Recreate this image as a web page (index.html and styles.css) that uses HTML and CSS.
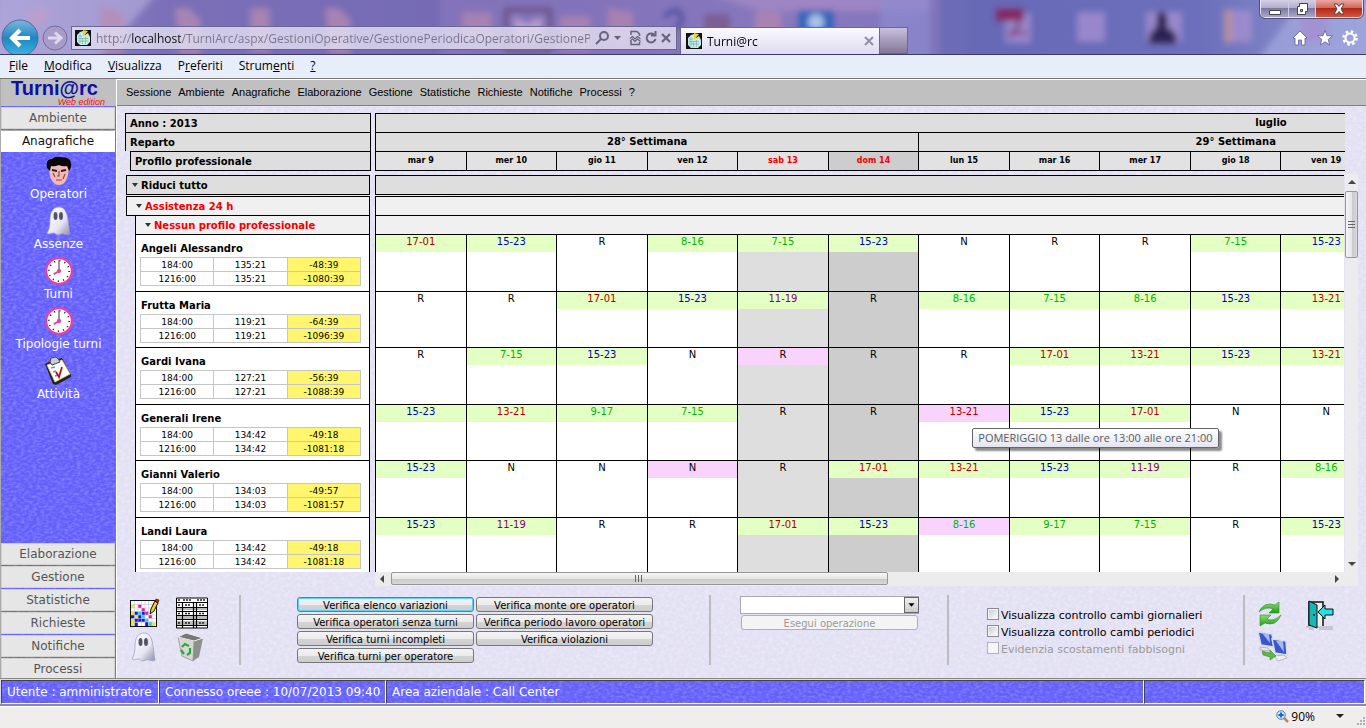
FILE: index.html
```html
<!DOCTYPE html>
<html lang="it">
<head>
<meta charset="utf-8">
<title>Turni@rc</title>
<link rel="stylesheet" href="styles.css">
</head>
<body>
<svg class="defs" aria-hidden="true">
  <defs>
    <filter id="soft"><feGaussianBlur stdDeviation="3"/></filter>
    <linearGradient id="ghostFill" x1="0" x2="1" y1="0" y2="1"><stop offset="0" stop-color="#fff"/><stop offset=".6" stop-color="#e6e6f4"/><stop offset="1" stop-color="#8d8da8"/></linearGradient>
    <linearGradient id="backFill" x1="0" x2="0" y1="0" y2="1"><stop offset="0" stop-color="#7cb8de"/><stop offset=".5" stop-color="#1f86c4"/><stop offset="1" stop-color="#3cb6e2"/></linearGradient>
    <linearGradient id="greenFill" x1="0" x2="0" y1="0" y2="1"><stop offset="0" stop-color="#8ae06c"/><stop offset="1" stop-color="#1f9a1f"/></linearGradient>
    <symbol id="site" viewBox="0 0 16 16"><rect width="16" height="16" fill="#111"/><path d="M2 5l3-3 3-1v3l2 1 3-2 2 4v5l-3 3H5l-3-3z" fill="#c4ebe6"/><path d="M8 0l5 1-5 6z" fill="#f4d21c"/><path d="M3 6h4M3 8.500h10M3 11h10M5 4v9M7.500 8v6M10.500 7v7" stroke="#7bb5ae" stroke-width=".7"/></symbol>
    <symbol id="ghost" viewBox="0 0 28 30"><path d="M14 1C7 1 5 8 5 14c0 6-1 10-3 13 2 2 4 0 6 0s3 2 5 2 4-2 6-1 5 1 6 0c-1-4-1-8-2-14-1-7-3-13-9-13z" fill="url(#ghostFill)" stroke="#9a9ac0" stroke-width=".7"/><ellipse cx="10.500" cy="10" rx="2" ry="4" fill="#55556a"/><ellipse cx="16" cy="10" rx="2" ry="4" fill="#55556a"/></symbol>
    <symbol id="clock" viewBox="0 0 28 28"><circle cx="14" cy="14" r="12" fill="#fff" stroke="#ee3fa0" stroke-width="2"/><circle cx="14" cy="14" r="9.500" fill="none" stroke="#222" stroke-width="1.600" stroke-dasharray="1 3.974"/><path d="M14 14V4" stroke="#777" stroke-width="1.400"/><path d="M14 14l-5 3" stroke="#e0409a" stroke-width="1.600"/><circle cx="14" cy="14" r="2" fill="#ee3fa0"/></symbol>
  </defs>
</svg>

<header class="browser">
  <svg class="glass" viewBox="0 0 1366 54" preserveAspectRatio="none" aria-hidden="true">
    <g filter="url(#soft)">
      <path d="M0-10h160L90 70H-10z" fill="#b9b2e0" opacity=".6"/>
      <path d="M440-9h500v75H440z" fill="#8f7cc0" opacity=".5"/>
      <path d="M700-9h230v20H760z" fill="#a98bc8" opacity=".7"/>
      <path d="M1250 70l60-80h70v80z" fill="#a3aade" opacity=".7"/>
      <path d="M25 15l16-8 10 5-8 12-12 3z" fill="#c79bc8" opacity=".6"/>
      <path d="M100 8h14l10 10v36h-22zM175 8h14l12 12v34h-22zM250 8h20v44h-20zM325 8h14l12 12v34h-22z" fill="#b78bb0" opacity=".75"/>
      <path d="M462 12h30v28h-30zM560 16h30v34h-30zM608 8l25 4v30h-25zM755 12h26v22h-26z" fill="#c08cab" opacity=".6"/>
      <path d="M506 10h44v40h-44z" fill="none" stroke="#65486f" stroke-width="4"/><path d="M514 16l12 8 16-7v22h-26z" fill="#bb9cc8"/>
      <path d="M664 17q16-14 18 2-2 8-8 9" fill="none" stroke="#4c4da0" stroke-width="5"/>
      <path d="M704 14h26v30h-26z" fill="#7c5f93"/><path d="M798 10h36v34h-36z" fill="#2e64b8"/><circle cx="816" cy="22" r="8" fill="#a8c4e8"/>
      <path d="M880-5h50v70h-50z" fill="#8d8bd0" opacity=".7"/><path d="M1005 13h26v30h-26zM1077 12h28v30h-28zM1146 12h36v30h-36zM1224 10h28v32h-28zM1300 12h28v30h-28z" fill="#a48fd0" opacity=".8"/>
      <path d="M996 9h28v12h-28z" fill="#852862"/><path d="M1010 38q10-10 9-18M1008 33h20" stroke="#8b3f84" stroke-width="3"/>
      <path d="M1148 43q2-14 9-16-2-16 5-15 7 0 5 16 10 2 10 15z" fill="#2f2152"/><path d="M1224 9h8v34h-8z" fill="#b78f9e"/>
    </g>
  </svg>
  <div class="window-buttons">
    <button type="button" aria-label="Riduci a icona"><svg width="14" height="14" viewBox="0 0 14 14"><path d="M1.500 8.500h11v4h-11z" fill="#fff" stroke="#445" /></svg></button>
    <button type="button" aria-label="Ripristina"><svg width="14" height="14" viewBox="0 0 14 14"><path d="M4.500 1.500h8v8h-2v3h-8v-8h2z" fill="#fff" stroke="#445"/><path d="M5.500 7.500h2v2h-2z" fill="#9a94b8" stroke="#445"/></svg></button>
    <button type="button" class="close" aria-label="Chiudi"><svg width="14" height="14" viewBox="0 0 14 14"><path d="M2 2h3l2 2.500L9 2h3L9 7l3 5H9L7 9.500 5 12H2l3-5z" fill="#fff" stroke="#544"/></svg></button>
  </div>
  <nav class="nav-row">
    <button type="button" class="round" aria-label="Indietro"><svg width="38" height="38" viewBox="0 0 38 38"><circle cx="19" cy="19" r="18" fill="url(#backFill)" stroke="#56658f"/><path d="M29 19H12M19 11l-8 8 8 8" fill="none" stroke="#fff" stroke-width="4"/></svg></button>
    <button type="button" class="round" aria-label="Avanti"><svg width="26" height="26" viewBox="0 0 26 26"><circle cx="13" cy="13" r="12" fill="#a79bc9" stroke="#716b9b"/><path d="M6 13h12M13 7.500l6 5.500-6 5.500" fill="none" stroke="#dcd8ee" stroke-width="3"/></svg></button>
    <div class="address">
      <svg width="16" height="16"><use href="#site"/></svg>
      <input type="text" aria-label="Indirizzo" value="http://localhost/TurniArc/aspx/GestioniOperative/GestionePeriodicaOperatori/GestionePeriodica">
      <svg width="76" height="16" viewBox="0 0 76 16" fill="none" stroke="#66647c" stroke-width="2"><circle cx="9" cy="6" r="4"/><path d="M6 9l-5 5"/><path d="M19 6h7l-3.500 4z" fill="#66647c" stroke="none"/><path d="M36 5V1.500h6l2.500 2.500v2M36 11v3.500h8.500V12" stroke-width="1.500"/><path d="M35 8.500l2.500-2L40 9l2.500-2.500L45.500 9M35 11l2.500-2L40 11.500 42.500 9l3 2.500" stroke-width="1.200"/><path d="M59 4.500A4.500 4.500 0 1 0 60.500 9M60.500 1v4.500H56"/><path d="M67 4l8 8M75 4l-8 8" stroke-width="2.200"/></svg>
    </div>
    <div class="tab"><svg width="16" height="16"><use href="#site"/></svg><span>Turni@rc</span><button type="button" aria-label="Chiudi scheda"><svg width="10" height="10" viewBox="0 0 10 10"><path d="M1 1l8 8M9 1L1 9" stroke="#918fa5" stroke-width="2"/></svg></button></div>
    <button type="button" class="new-tab" aria-label="Nuova scheda"></button>
    <div class="tools">
      <button type="button" aria-label="Home"><svg width="16" height="16" viewBox="0 0 16 16"><path d="M8 1l7 7-1 1-1-1v7H9.500v-5h-3v5H3V8L2 9 1 8z" fill="#fff" stroke="#5f5f8a" stroke-width=".8"/></svg></button>
      <button type="button" aria-label="Preferiti"><svg width="16" height="16" viewBox="0 0 16 16"><path d="M8 .5l2 5.200 5.500.2-4.300 3.500 1.500 5.600L8 11.800 3.300 15l1.500-5.600L.5 5.900l5.500-.2z" fill="#fff" stroke="#5f5f8a" stroke-width=".8"/></svg></button>
      <button type="button" aria-label="Strumenti"><svg width="16" height="16" viewBox="0 0 16 16"><circle cx="8" cy="8" r="6.500" fill="none" stroke="#fff" stroke-width="2.500" stroke-dasharray="2.550 2.550"/><circle cx="8" cy="8" r="4.500" fill="none" stroke="#fff" stroke-width="2"/></svg></button>
    </div>
  </nav>
</header>

<nav class="menubar">
  <a href="#"><u>F</u>ile</a><a href="#"><u>M</u>odifica</a><a href="#"><u>V</u>isualizza</a><a href="#">P<u>r</u>eferiti</a><a href="#">Strum<u>e</u>nti</a><a href="#"><u>?</u></a>
</nav>

<div class="app">
  <aside class="sidebar">
    <div class="logo"><strong>Turni@rc</strong><em>Web edition</em></div>
    <div class="tabs"><button type="button">Ambiente</button><button type="button" class="open">Anagrafiche</button></div>
    <nav class="shortcuts">
      <a href="#"><svg width="30" height="30" viewBox="0 0 30 30"><path d="M5 11q0 13 6 17 4 2 8 0 5-3 6-17l-3-5H9z" fill="#f3b9b4"/><path d="M3 12Q1 3 8 3q3-3 9-2 9 0 10 6 1 4-2 8l-2-5q-5 1-8-1-5 2-8 1l-1 5z" fill="#080808"/><path d="M8 14l5 1M17 15l5-1" stroke="#222" stroke-width="1.800"/><path d="M15 15v5h-2M12 24h6M9 17l2 4M21 18l-2 5" stroke="#8a4b50" stroke-width="1.200" fill="none"/></svg>Operatori</a>
      <a href="#"><svg width="28" height="30"><use href="#ghost"/></svg>Assenze</a>
      <a href="#"><svg width="30" height="30"><use href="#clock"/></svg>Turni</a>
      <a href="#"><svg width="30" height="30"><use href="#clock"/></svg>Tipologie turni</a>
      <a href="#"><svg width="30" height="30" viewBox="0 0 30 30"><path d="M1 8l6-3 11-3 9 17v2l-15 8-3-1z" fill="#222"/><path d="M3 9l15-5 8 14-15 8z" fill="#fff" stroke="#e8d27a" stroke-width=".8"/><path d="M6 6l1-4 5-1 3 3 1 2-8 3z" fill="#c9cdd2" stroke="#444"/><path d="M7 12l4-1M9 16l3-1M11 20l3-1" stroke="#7a84dc" stroke-width="1.500"/><path d="M12 16l3 5 3-10" fill="none" stroke="#b01818" stroke-width="1.800"/></svg>Attività</a>
    </nav>
    <div class="tabs tabs-low"><button type="button">Elaborazione</button><button type="button">Gestione</button><button type="button">Statistiche</button><button type="button">Richieste</button><button type="button">Notifiche</button><button type="button">Processi</button></div>
  </aside>

  <main class="main">
    <nav class="topbar"><a href="#">Sessione</a><a href="#">Ambiente</a><a href="#">Anagrafiche</a><a href="#">Elaborazione</a><a href="#">Gestione</a><a href="#">Statistiche</a><a href="#">Richieste</a><a href="#">Notifiche</a><a href="#">Processi</a><a href="#">?</a></nav>

    <section class="planner">
      <div class="key"><div>Anno : 2013</div><div>Reparto</div><div class="inner">Profilo professionale</div></div>
      <div class="clip">
        <table class="days">
          <colgroup><col span="20"></colgroup>
          <tr><th colspan="20" class="month">luglio</th></tr>
          <tr><th colspan="6">28° Settimana</th><th colspan="7">29° Settimana</th><th colspan="7"></th></tr>
          <tr class="dates"><th>mar 9</th><th>mer 10</th><th>gio 11</th><th>ven 12</th><th class="red">sab 13</th><th class="red sunday">dom 14</th><th>lun 15</th><th>mar 16</th><th>mer 17</th><th>gio 18</th><th>ven 19</th><th colspan="9"></th></tr>
        </table>
      </div>

      <div class="people">
        <button type="button" class="fold all">Riduci tutto</button>
        <button type="button" class="fold dept">Assistenza 24 h</button>
        <button type="button" class="fold profile">Nessun profilo professionale</button>
        <div class="list">
          <div class="person"><b>Angeli Alessandro</b><table><tr><td>184:00</td><td>135:21</td><td>-48:39</td></tr><tr><td>1216:00</td><td>135:21</td><td>-1080:39</td></tr></table></div>
          <div class="person"><b>Frutta Maria</b><table><tr><td>184:00</td><td>119:21</td><td>-64:39</td></tr><tr><td>1216:00</td><td>119:21</td><td>-1096:39</td></tr></table></div>
          <div class="person"><b>Gardi Ivana</b><table><tr><td>184:00</td><td>127:21</td><td>-56:39</td></tr><tr><td>1216:00</td><td>127:21</td><td>-1088:39</td></tr></table></div>
          <div class="person"><b>Generali Irene</b><table><tr><td>184:00</td><td>134:42</td><td>-49:18</td></tr><tr><td>1216:00</td><td>134:42</td><td>-1081:18</td></tr></table></div>
          <div class="person"><b>Gianni Valerio</b><table><tr><td>184:00</td><td>134:03</td><td>-49:57</td></tr><tr><td>1216:00</td><td>134:03</td><td>-1081:57</td></tr></table></div>
          <div class="person"><b>Landi Laura</b><table><tr><td>184:00</td><td>134:42</td><td>-49:18</td></tr><tr><td>1216:00</td><td>134:42</td><td>-1081:18</td></tr></table></div>
        </div>
      </div>
      <div class="clip body-clip">
        <div class="band all"></div><div class="band dept"></div><div class="band profile"></div>
        <table class="shifts">
          <colgroup><col span="4"><col class="sat"><col class="sun"><col span="14"></colgroup>
          <tr><td><span class="s on late">17-01</span></td><td><span class="s on noon">15-23</span></td><td><span class="s">R</span></td><td><span class="s on early">8-16</span></td><td><span class="s on early">7-15</span></td><td><span class="s on noon">15-23</span></td><td><span class="s">N</span></td><td><span class="s">R</span></td><td><span class="s">R</span></td><td><span class="s on early">7-15</span></td><td><span class="s on noon">15-23</span></td><td colspan="9"></td></tr>
          <tr><td><span class="s">R</span></td><td><span class="s">R</span></td><td><span class="s on late">17-01</span></td><td><span class="s on noon">15-23</span></td><td><span class="s on mid">11-19</span></td><td><span class="s">R</span></td><td><span class="s on early">8-16</span></td><td><span class="s on early">7-15</span></td><td><span class="s on early">8-16</span></td><td><span class="s on noon">15-23</span></td><td><span class="s on late">13-21</span></td><td colspan="9"></td></tr>
          <tr><td><span class="s">R</span></td><td><span class="s on early">7-15</span></td><td><span class="s on noon">15-23</span></td><td><span class="s">N</span></td><td><span class="s changed">R</span></td><td><span class="s">R</span></td><td><span class="s">R</span></td><td><span class="s on late">17-01</span></td><td><span class="s on late">13-21</span></td><td><span class="s on noon">15-23</span></td><td><span class="s on late">13-21</span></td><td colspan="9"></td></tr>
          <tr><td><span class="s on noon">15-23</span></td><td><span class="s on late">13-21</span></td><td><span class="s on early">9-17</span></td><td><span class="s on early">7-15</span></td><td><span class="s">R</span></td><td><span class="s">R</span></td><td class="hovered"><span class="s changed late">13-21</span><span class="tooltip" role="tooltip">POMERIGGIO 13 dalle ore 13:00 alle ore 21:00</span></td><td><span class="s on noon">15-23</span></td><td><span class="s on late">17-01</span></td><td><span class="s">N</span></td><td><span class="s">N</span></td><td colspan="9"></td></tr>
          <tr><td><span class="s on noon">15-23</span></td><td><span class="s">N</span></td><td><span class="s">N</span></td><td><span class="s changed">N</span></td><td><span class="s">R</span></td><td><span class="s on late">17-01</span></td><td><span class="s on late">13-21</span></td><td><span class="s on noon">15-23</span></td><td><span class="s on mid">11-19</span></td><td><span class="s">R</span></td><td><span class="s on early">8-16</span></td><td colspan="9"></td></tr>
          <tr><td><span class="s on noon">15-23</span></td><td><span class="s on mid">11-19</span></td><td><span class="s">R</span></td><td><span class="s">R</span></td><td><span class="s on late">17-01</span></td><td><span class="s on noon">15-23</span></td><td><span class="s changed early">8-16</span></td><td><span class="s on early">9-17</span></td><td><span class="s on early">7-15</span></td><td><span class="s">R</span></td><td><span class="s on noon">15-23</span></td><td colspan="9"></td></tr>
        </table>
      </div>
      <div class="vscroll"><i class="arrow up"></i><div class="thumb"></div><i class="arrow down"></i></div>
      <div class="hscroll"><i class="arrow left"></i><div class="track"><div class="thumb"></div></div><i class="arrow right"></i></div>
    </section>

    <section class="actions">
      <div class="icon-grid">
        <button type="button" aria-label="Modifica turni"><svg width="30" height="30" viewBox="0 0 30 30"><path d="M0 2h27v27H0z" fill="#111"/><path d="M1 3h25v25H1z" fill="#fff"/><path d="M1 6.500h3.500V10H1zM1 13.500h3.500V28H1zM4.500 17H8v3.500H4.500zM22 24.500h3.500V28H22z" fill="#f5ea1a"/><path d="M8 6.500h3.500V10H8zM11.500 10H15v3.500h-3.500zM15 13.500h3.500V17H15zM18.500 17H22v3.500h-3.500z" fill="#e91e8c"/><path d="M4.500 13.500H8V17H4.500zM1 17h3.500v3.500H1zM8 17h3.500v3.500H8zM4.500 20.500h10.500V24H4.500zM11.500 13.500H15V17h-3.500zM15 24h3.500v4H15zM4.500 24.500H8V28H4.500z" fill="#1717e0"/><path d="M8 13.500h3.500V17H8zM11.500 17H15v3.500h-3.500zM15 20.500h3.500V24H15zM18.500 24H22v4h-3.500z" fill="#20d5ea"/><path d="M4.500 3v25M8 3v25M11.500 3v25M15 3v25M18.500 3v25M22 3v25M1 6.500h25M1 10h25M1 13.500h25M1 17h25M1 20.500h25M1 24h25" stroke="#c5c5d5" stroke-width=".6"/><path d="M20 16l1-5 4-8 3 2-4 8z" fill="#f4d21c" stroke="#111"/><path d="M25 3l1-2 3 1-1 3z" fill="#d01818" stroke="#111" stroke-width=".6"/></svg></button>
        <button type="button" aria-label="Tabella turni"><svg width="32" height="32" viewBox="0 0 32 32"><path d="M.500 1h31v30H.500z" fill="#fff" stroke="#000"/><path d="M1 10h30v3H1zM1 19h30v3H1zM1 24h30v4H1z" fill="#bbb"/><path d="M1 5.500h30M1 10.500h30M1 14.500h30M1 18.500h30M1 22.500h30M1 28.500h30M6.500 5v26M17.500 5v26M20.500 5v26" stroke="#000" stroke-width="1.200"/><path d="M2 3h3M7 3h8M21 3h8M2 8h3M9 8h6M23 8h6M2 16.500h3M9 16.500h6M23 16.500h6M2 26h3M9 26h6M23 26h6" stroke="#222" stroke-width="1.500" stroke-dasharray="2 1"/></svg></button>
        <button type="button" aria-label="Assenze"><svg width="28" height="30"><use href="#ghost"/></svg></button>
        <button type="button" aria-label="Cestino"><svg width="30" height="30" viewBox="0 0 30 30"><path d="M2 5l16 4-1 20-11-5z" fill="#d7d8d4" stroke="#888" stroke-width=".7"/><path d="M18 9l9-3-4 19-6 4z" fill="#8d8f8a"/><path d="M2 5l8-4 17 5-9 3z" fill="#777" stroke="#eee"/><path d="M6 15l3-3 4 2M14 16v5l-3 2M8 22l-3-4" fill="none" stroke="#27a83a" stroke-width="2.200"/></svg></button>
      </div>
      <div class="checks">
        <button type="button" class="focus">Verifica elenco variazioni</button><button type="button">Verifica monte ore operatori</button>
        <button type="button">Verifica operatori senza turni</button><button type="button">Verifica periodo lavoro operatori</button>
        <button type="button">Verifica turni incompleti</button><button type="button">Verifica violazioni</button>
        <button type="button">Verifica turni per operatore</button>
      </div>
      <div class="operation">
        <div class="combo"><select aria-label="Operazione"><option></option></select><svg width="15" height="16" viewBox="0 0 15 16" aria-hidden="true"><path d="M4 6h7l-3.500 4z"/></svg></div>
        <button type="button" disabled>Esegui operazione</button>
      </div>
      <div class="options">
        <label><input type="checkbox">Visualizza controllo cambi giornalieri</label>
        <label><input type="checkbox">Visualizza controllo cambi periodici</label>
        <label class="off"><input type="checkbox" disabled>Evidenzia scostamenti fabbisogni</label>
      </div>
      <div class="icon-grid exit">
        <button type="button" aria-label="Aggiorna"><svg width="26" height="26" viewBox="0 0 26 26" fill="url(#greenFill)" stroke="#2f8f2a" stroke-width=".6"><path d="M2 11Q7 0 18 4l4-3v11H12l4-4Q9 5 2 11z"/><path d="M24 14q-5 12-16 8l-5 3V14h11l-4 4q7 3 14-4z"/></svg></button>
        <button type="button" aria-label="Esci"><svg width="30" height="30" viewBox="0 0 30 30"><path d="M1 27h27M4 29h5M14 29h14" stroke="#aaa"/><path d="M4 26V2h14v24" fill="#eee" stroke="#111" stroke-width="1.500"/><path d="M4 1l8 4v23l-8-3z" fill="#18b6b6" stroke="#111"/><circle cx="9" cy="15" r="1" fill="#111"/><path d="M13 12l7-7v4h8v6h-8v4z" fill="#28e0e4" stroke="#111"/></svg></button>
        <button type="button" aria-label="Sincronizza"><svg width="32" height="32" viewBox="0 0 32 32"><path d="M1 2l14 2 2 13-13-2z" fill="#3858c8" stroke="#d8dcea" stroke-width="1.500"/><path d="M3 17l8 1 2 3-10-1z" fill="#e6e6ee" stroke="#999" stroke-width=".6"/><path d="M15 9l14 2 1 14-12-2z" fill="#3858c8" stroke="#d8dcea" stroke-width="1.500"/><path d="M5 3l8 10-1-9zM19 11l8 11-1-11z" fill="#a6b8f0"/><path d="M17 26l10-1 3 3-9 3z" fill="#eee" stroke="#999" stroke-width=".6"/><path d="M5 21l8 2v-3l6 6-6 4v-3l-7-2z" fill="#5cb848" stroke="#377f2b" stroke-width=".5"/></svg></button>
      </div>
    </section>
  </main>
</div>

<footer class="status"><span class="user">Utente : amministratore</span><span class="since">Connesso oreee : 10/07/2013 09:40</span><span class="area">Area aziendale : Call Center</span><span class="blank"></span></footer>
<div class="zoom-bar"><button type="button"><svg width="13" height="13" viewBox="0 0 13 13"><path d="M8 8l4 4" stroke="#b98a5a" stroke-width="2.500"/><circle cx="5" cy="5" r="4.300" fill="#cfe6fa" stroke="#4a80c0"/><path d="M5 2.500v5M2.500 5h5" stroke="#1c60c0" stroke-width="1.800"/></svg>90%<i class="caret"></i></button><svg class="grip" width="8" height="8" viewBox="0 0 8 8" fill="#b5b1b1"><path d="M6 0h2v2H6zM3 3h2v2H3zM6 3h2v2H6zM0 6h2v2H0zM3 6h2v2H3zM6 6h2v2H6z"/></svg></div>
</body>
</html>
```
FILE: styles.css
```css
:root {
  --ui: "DejaVu Sans", sans-serif;
  --chrome: "Open Sans", "Noto Sans", sans-serif;
  --paper: url("data:image/svg+xml,%3Csvg xmlns='http://www.w3.org/2000/svg' width='128' height='128'%3E%3Cfilter id='n' x='0' y='0' width='100%25' height='100%25'%3E%3CfeTurbulence type='fractalNoise' baseFrequency='.25 .3' numOctaves='3' stitchTiles='stitch'/%3E%3CfeColorMatrix values='0 0 0 0 1 0 0 0 0 1 0 0 0 0 1 2.5 0 0 0 -1'/%3E%3C/filter%3E%3Crect width='128' height='128' filter='url(%23n)' opacity='.3'/%3E%3C/svg%3E");
  --weave: url("data:image/svg+xml,%3Csvg xmlns='http://www.w3.org/2000/svg' width='96' height='96'%3E%3Cfilter id='n' x='0' y='0' width='100%25' height='100%25'%3E%3CfeTurbulence type='fractalNoise' baseFrequency='.25 .4' numOctaves='3' stitchTiles='stitch'/%3E%3CfeColorMatrix values='0 0 0 0 .6 0 0 0 0 .6 0 0 0 0 1 2.5 0 0 0 -1'/%3E%3C/filter%3E%3Crect width='96' height='96' filter='url(%23n)' opacity='.3'/%3E%3C/svg%3E");
}
* { box-sizing: border-box; }
body { margin: 0; height: 100vh; display: flex; flex-direction: column; overflow: hidden; font-family: var(--ui); font-size: 10px; color: #000; background: #f0eded; }
button { font: inherit; color: inherit; padding: 0; margin: 0; border: 0; background: none; }
a { color: inherit; text-decoration: none; }
svg { display: block; flex: none; }
.defs { position: absolute; width: 0; height: 0; }
table { border-collapse: separate; border-spacing: 0; table-layout: fixed; }

/* browser frame */
.browser { position: relative; flex: none; height: 55px; padding-top: 19px; overflow: hidden; border-bottom: 1px solid #3c3a66; background: linear-gradient(90deg, #9c92cf, #7b70b8 12%, #7468b4 40%, #8175bc 60%, #6769b6 72%, #6c70bc 88%, #9298d2); font-family: var(--chrome); }
.glass { position: absolute; left: 0; top: 0; width: 100%; height: 100%; }
.window-buttons { position: absolute; right: 3px; top: 0; display: flex; height: 18px; border: 1px solid #e6e2f2; border-top: 0; border-radius: 0 0 5px 5px; outline: 1px solid #55507a; overflow: hidden; }
.window-buttons button { width: 28px; display: flex; justify-content: center; align-items: center; background: linear-gradient(#d4d0e4, #b4aecb 45%, #7d78a2 50%, #a9a7cc); border-right: 1px solid #d0cce4; }
.window-buttons button + button { width: 27px; }
.window-buttons .close { width: 46px; background: linear-gradient(#e9a9a4, #d3685c 45%, #b02a18 50%, #d6553f); border: 0; }
.nav-row { position: relative; display: flex; align-items: flex-start; height: 36px; padding-left: 1px; }
.round + .round { margin: 6px 4px 0 3px; }
.address { display: flex; align-items: center; gap: 5px; width: 606px; height: 24px; flex: 0 1 606px; padding: 0 5px 0 3px; margin: 7px 0 0 -1px; border: 1px solid #6a6791; background: rgba(226,222,242,.82); }
.address input { flex: 1; min-width: 0; height: 22px; padding: 0; border: 0; outline: 0; font: 12px var(--chrome); color: transparent; background: linear-gradient(90deg, #77748a 36px, #111 36px, #111 85px, #77748a 85px); -webkit-background-clip: text; background-clip: text; }
.tab { display: flex; align-items: center; gap: 5px; flex: 0 1 200px; height: 27px; margin: 8px 0 0 3px; padding: 0 5px; border: 1px solid #6a6791; border-bottom: 0; background: linear-gradient(#fbfafe, #dedaf1); font-size: 12px; }
.tab span { flex: 1; }
.new-tab { width: 28px; height: 27px; margin-top: 8px; border: 1px solid #6a6791; border-left: 0; background: linear-gradient(#c9c0dc, #837898); }
.tools { display: flex; gap: 9px; margin: 11px 8px 0 auto; }
.menubar { flex: none; display: flex; align-items: center; gap: 16px; height: 24px; padding: 0 9px 2px; border-bottom: 1px solid #777; background: #e7eefa; font: 12px var(--chrome); }

/* application shell */
.app { flex: 1; min-height: 0; display: grid; grid-template-columns: 117px minmax(0, 1fr); grid-template-rows: minmax(0, 1fr); }
.sidebar { display: flex; flex-direction: column; min-height: 0; overflow: hidden; border-left: 1px solid #aaa; border-right: 1px solid #fff; background: var(--weave) #635ffb; font-size: 12px; }
.logo { display: flex; flex-direction: column; height: 27px; padding: 0 11px 0 10px; background: #c0c0c0; font-family: "Liberation Sans", Arial, sans-serif; }
.logo strong { font-size: 20px; line-height: 19px; color: #0c10a8; }
.logo em { align-self: flex-end; font-size: 9px; line-height: 8px; color: #f01414; }
.tabs { display: flex; flex-direction: column; gap: 1px; padding: 1px 1px 0 0; flex: none; }
.tabs button { flex: none; height: 22px; line-height: 16px; color: #555; background: #e6e6e6; border: 1px solid #d2d2d2; }
.tabs .open { color: #111; background: #fff; border-color: #aaa #fff #fff; }
.tabs-low { height: 138px; padding-top: 3px; overflow: hidden; }
.shortcuts { flex: 1; min-height: 0; display: flex; flex-direction: column; gap: 4px; padding-top: 4px; color: #fff; text-align: center; }
.shortcuts a { display: flex; flex-direction: column; align-items: center; height: 46px; line-height: 16px; }
.main { display: flex; flex-direction: column; min-width: 0; min-height: 0; background: var(--paper) #e2e0f3; }
.topbar { flex: none; display: flex; align-items: center; gap: 7px; height: 27px; padding: 0 9px 2px; border-top: 1px solid #fff; border-bottom: 1px solid #808080; background: #c0c0c0; font: 11px "Liberation Sans", Arial, sans-serif; }

/* planner */
.planner { flex: 1; min-height: 0; display: grid; grid-template-columns: 250px minmax(0, 1fr) 13px; grid-template-rows: 58px 4px minmax(0, 1fr) 14px; padding: 7px 8px 0; }
.key { grid-area: 1 / 1; display: flex; flex-direction: column; padding-right: 4px; font-weight: bold; }
.key div { height: 19px; padding-left: 4px; line-height: 20px; background: #dedede; border: 1px solid #000; border-bottom: 0; }
.key .inner { height: 20px; margin-left: 5px; border-bottom: 1px solid #000; }
.clip { grid-area: 1 / 2; overflow: hidden; min-width: 0; min-height: 0; }
.body-clip { grid-area: 3 / 2; margin-right: 1px; }
.days, .shifts { width: 1812px; border-left: 1px solid #000; }
.days { border-top: 1px solid #000; background: #dedede; }
.days th { height: 19px; padding: 0; line-height: 18px; border-right: 1px solid #000; border-bottom: 1px solid #000; }
.days .month { padding-right: 20px; }
.days .dates th { font-size: 8px; background: #e2e2e2; }
.days .dates .red { color: #f00000; }
.days .dates .sunday { background: #cdcdcd; }
.people { grid-area: 3 / 1; display: flex; flex-direction: column; overflow: hidden; padding: 0 5px 0 1px; }
.fold { flex: none; display: flex; align-items: center; gap: 2px; height: 20px; padding-left: 5px; font-weight: bold; border: 1px solid #000; }
.fold::before { content: ""; margin-right: 1px; border: 3px solid transparent; border-top: 4px solid #333; border-bottom: 0; }
.all { background: #dedede; }
.dept, .profile { color: #f00000; background: #f0f0f0; }
.fold.all { margin-bottom: 1px; }
.fold.dept { padding-left: 9px; }
.fold.profile { height: 19px; margin-left: 9px; border-top: 0; padding-left: 9px; }
.band { height: 20px; border: 1px solid #000; border-right: 0; }
.band.all { margin-bottom: 1px; }
.band.profile { height: 19px; border-top: 0; }
.list { margin-left: 9px; }
.person { height: 56px; padding: 7px 8px 0 4px; background: #fff; border: 1px solid #000; border-top: 0; }
.person:nth-child(odd) { height: 57px; }
.person b { display: block; height: 15px; line-height: 13px; padding-left: 1px; }
.person table { width: 100%; border: 1px solid #c6c6c6; border-width: 1px 0 0 1px; }
.person td { height: 14px; padding: 0; font-size: 9px; line-height: 12px; text-align: center; border: 1px solid #c6c6c6; border-width: 0 1px 1px 0; }
.person td:last-child { background: #fff66e; }
.shifts { background: #fff; }
.shifts td { height: 56px; padding: 0; vertical-align: top; text-align: center; border-right: 1px solid #000; border-bottom: 1px solid #000; }
.shifts tr:nth-child(odd) td { height: 57px; }
.sat { background: #dedede; }
.sun { background: #cdcdcd; }
.s { display: block; height: 17px; line-height: 14px; }
.on { background: #e4ffc4; }
.changed { background: #f8d4fc; }
.early { color: #00b400; }
.noon { color: #0000b4; }
.late { color: #b40000; }
.mid { color: #800080; }
.hovered { position: relative; }
.tooltip { position: absolute; z-index: 2; left: 53px; top: 23px; height: 20px; padding: 0 5px; line-height: 17px; white-space: nowrap; color: #5a5a5a; font-family: var(--chrome); font-size: 11px; border: 1px solid #666; border-radius: 2px; background: linear-gradient(#fff, #e4e5f0); box-shadow: 3px 3px 2px rgba(0,0,0,.45); }
.vscroll { grid-area: 2 / 3 / 4 / 4; display: flex; flex-direction: column; align-items: center; background: #ececec; margin-top: 3px; }
.vscroll .thumb { width: 13px; height: 67px; margin-top: 7px; margin-bottom: auto; border: 1px solid #979797; border-radius: 2px; background: repeating-linear-gradient(#666 0 1px, transparent 1px 3px) center / 7px 8px no-repeat, linear-gradient(90deg, #f5f5f5, #e6e6e8 50%, #c9cace 55%, #d8d8dc); }
.hscroll { grid-area: 4 / 2 / 5 / 4; display: flex; align-items: center; gap: 7px; padding: 0 19px 1px 5px; background: #ececec; }
.track { flex: 1; }
.hscroll .thumb { width: 53%; height: 13px; border: 1px solid #979797; border-radius: 2px; background: repeating-linear-gradient(90deg, #666 0 1px, transparent 1px 3px) center / 8px 7px no-repeat, linear-gradient(#f5f5f5, #e6e6e8 50%, #c9cace 55%, #d8d8dc); }
.arrow { flex: none; border: 4px solid transparent; }
.up { border-top: 0; border-bottom-color: #444; margin-top: 6px; }
.down { border-bottom: 0; border-top-color: #444; margin-bottom: 6px; }
.left { border-left: 0; border-right-color: #444; }
.right { border-right: 0; border-left-color: #444; }

/* actions */
.actions { flex: none; display: flex; align-items: flex-start; height: 92px; padding: 9px 0 0 13px; }
.icon-grid { display: grid; grid-template-columns: 46px 32px; grid-auto-rows: 32px; row-gap: 2px; height: 70px; padding-top: 2px; width: 109px; }
.icon-grid button { justify-self: start; }
.checks { display: grid; grid-template-columns: 177px 177px; grid-auto-rows: 15px; gap: 2px; height: 70px; padding: 2px 0 0 56px; border-left: 2px solid #bcbcc0; width: 470px; }
.checks button, .operation button { display: flex; align-items: center; justify-content: center; white-space: nowrap; height: 15px; border: 1px solid #777; border-radius: 3px; background: linear-gradient(#f4f4f4, #ebebeb 50%, #d4d4d4 55%, #cdcdcd); }
.checks button { padding-top: 1px; }
.checks .focus { border-color: #2f8fc0; box-shadow: inset 0 0 0 1px #5bd2f4; }
.operation { display: flex; flex-direction: column; gap: 1px; width: 238px; height: 70px; padding: 1px 28px 0 29px; border-left: 2px solid #bcbcc0; }
.combo { position: relative; height: 18px; }
.combo select { display: block; width: 100%; height: 18px; appearance: none; border: 1px solid #a8a8ae; border-radius: 0; background: #fff; font: 10px var(--ui); }
.combo svg { position: absolute; right: 0; top: 1px; border: 1px solid #666; background: linear-gradient(#f0f0f0, #ccc); pointer-events: none; }
.operation button { margin: 0 1px; padding-top: 1px; color: #9a9a9a; border-color: #b0b0b4; background: #f4f4f4; }
.options { flex: 0 1 296px; height: 70px; padding: 12px 0 0 38px; border-left: 2px solid #bcbcc0; font-size: 11px; }
.options label { display: flex; align-items: center; gap: 2px; height: 17px; white-space: nowrap; }
.options input { appearance: none; flex: none; width: 12px; height: 12px; margin: 0 0 3px; border: 1px solid #8b8b92; background: linear-gradient(135deg, #c5c9d2, #fff); box-shadow: inset 0 0 0 1px #f4f4f4; }
.options .off { color: #9a9a9a; }
.options .off input { border-color: #b4b4b8; background: #f6f6f6; }
.exit { border-left: 2px solid #bcbcc0; padding: 5px 0 0 12px; grid-template-columns: 48px 32px; grid-auto-rows: 28px; }

/* status */
.status { flex: none; display: flex; height: 28px; padding: 1px 1px 0; border-top: 1px solid #888; border-bottom: 2px solid #8c8c94; background: #dcdce4; font-size: 12px; color: #fff; }
.status span { height: 24px; padding-left: 5px; line-height: 22px; white-space: nowrap; overflow: hidden; border: 1px solid #fff; border-color: #444 #fff #fff #444; background: var(--weave) #635ffb; }
.status .user { width: 158px; }
.status .since { width: 227px; }
.status .area { flex: 1; }
.status .blank { width: 221px; }
.zoom-bar { flex: none; display: flex; justify-content: flex-end; align-items: center; gap: 13px; height: 22px; padding: 0 1px 3px 0; border-top: 1px solid #fff; font: 12px var(--chrome); }
.zoom-bar button { display: flex; align-items: center; gap: 2px; }
.caret { margin-left: 19px; border: 4px solid transparent; border-top-color: #222; border-bottom: 0; }
.grip { align-self: flex-end; }
```
